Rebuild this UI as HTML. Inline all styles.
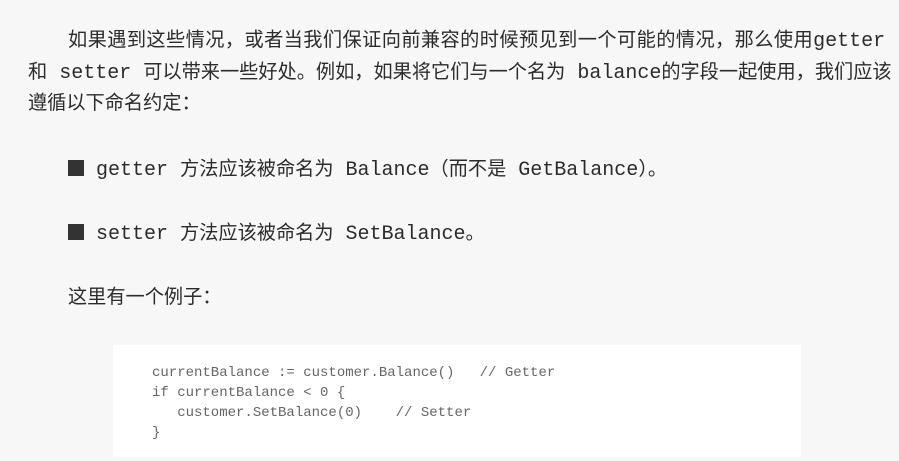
<!DOCTYPE html>
<html><head><meta charset="utf-8"><style>
body{margin:0;width:899px;height:461px;background:#f7f7f7;overflow:hidden;position:relative;
font-family:"Liberation Mono","Noto Sans CJK SC",monospace;font-size:19.2px;color:#2b2b2b;}
.l{position:absolute;white-space:pre;line-height:32px;}
.m{font-size:20px;letter-spacing:0}
.sq{display:inline-block;width:16px;height:16px;background:#333;vertical-align:-1px;margin-right:12px}
.code{position:absolute;left:113px;top:345px;width:688px;height:112px;background:#fff;}
.c{position:absolute;left:152px;white-space:pre;font-family:"Liberation Mono",monospace;font-size:14px;color:#666;line-height:20px}
</style></head><body>
<div class="l" style="left:68px;top:25px;letter-spacing:0.42px">如果遇到这些情况，或者当我们保证向前兼容的时候预见到一个可能的情况，那么使用<span class="m">getter</span></div>
<div class="l" style="left:28px;top:57px">和<span class="m"> setter </span>可以带来一些好处。例如，如果将它们与一个名为<span class="m"> balance</span>的字段一起使用，我们应该</div>
<div class="l" style="left:28px;top:88px">遵循以下命名约定：</div>
<div class="l" style="left:68px;top:154px"><span class="sq"></span><span class="m">getter </span>方法应该被命名为<span class="m"> Balance</span>（而不是<span class="m"> GetBalance</span>）。</div>
<div class="l" style="left:68px;top:218px"><span class="sq"></span><span class="m">setter </span>方法应该被命名为<span class="m"> SetBalance</span>。</div>
<div class="l" style="left:68px;top:282px">这里有一个例子：</div>
<div class="code"></div>
<div class="c" style="top:363px">currentBalance := customer.Balance()   // Getter</div>
<div class="c" style="top:383px">if currentBalance &lt; 0 {</div>
<div class="c" style="top:403px">   customer.SetBalance(0)    // Setter</div>
<div class="c" style="top:423px">}</div>
</body></html>
